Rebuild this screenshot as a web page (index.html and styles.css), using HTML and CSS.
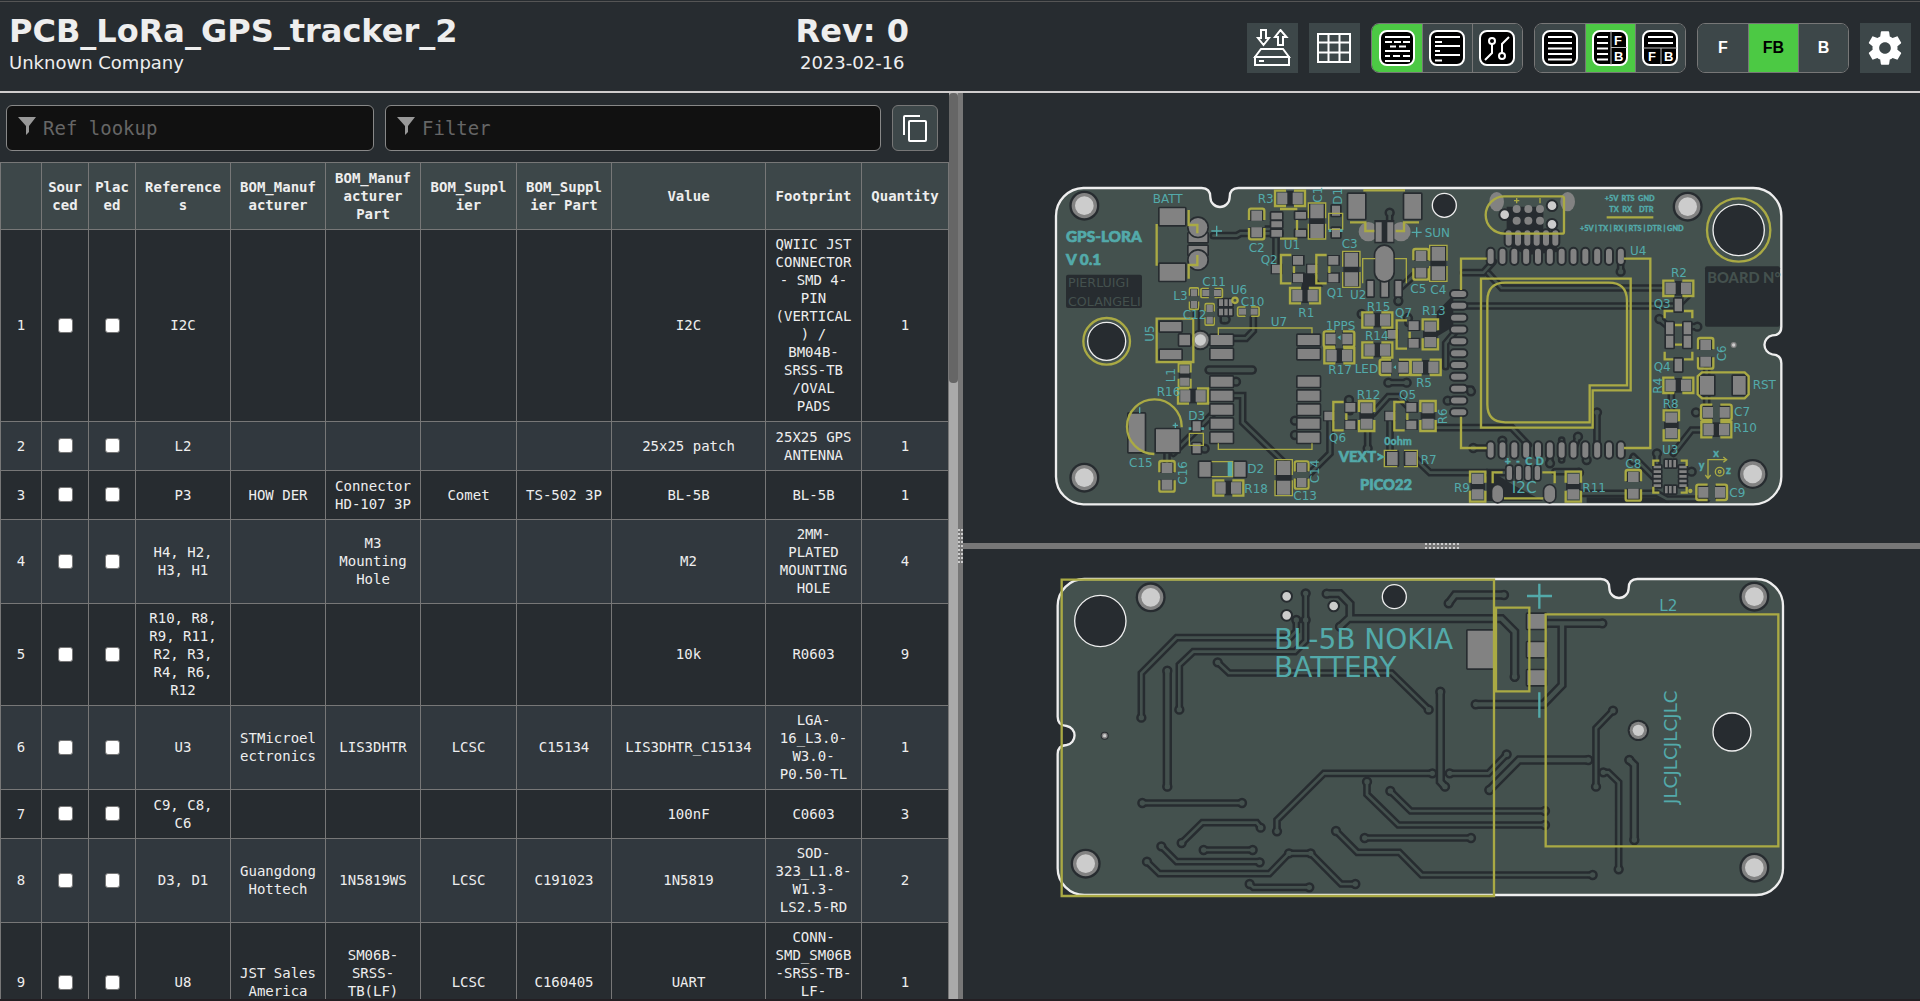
FILE: index.html
```html
<!DOCTYPE html>
<html lang="en">
<head>
<meta charset="utf-8">
<meta name="viewport" content="width=device-width, initial-scale=1">
<title>Interactive BOM - PCB_LoRa_GPS_tracker_2</title>
<link rel="stylesheet" href="styles.css">
</head>
<body>
<header class="topbar">
  <div class="title-block">
    <h1 class="title">PCB_LoRa_GPS_tracker_2</h1>
    <div class="subtitle">Unknown Company</div>
  </div>
  <div class="title-block centered">
    <div class="title">Rev: 0</div>
    <div class="subtitle">2023-02-16</div>
  </div>
  <div class="toolbar">
    <button class="tool" type="button" aria-label="Save and load">
      <svg width="38" height="38" viewBox="0 0 38 38" fill="none" stroke="#fff" stroke-width="2"><path d="M8 1h5v8h3l-5.500 7L5 9h3zM25 16h5V8h3.500L27.500 1 22 8h3zM8 20h22l6 8H2zM2 28h34v8H2zM6 32h5"/></svg>
    </button>
    <button class="tool" type="button" aria-label="Table view">
      <svg width="36" height="32" viewBox="0 0 36 32" fill="none" stroke="#fff" stroke-width="2"><path d="M2 2h32v28H2zM2 10.500h32M2 20.500h32M12.500 2v28M23.500 2v28"/></svg>
    </button>
    <div class="group" role="group" aria-label="BOM mode">
      <button class="seg active" type="button" aria-label="Grouped">
        <svg width="36" height="36" viewBox="0 0 36 36"><rect class="ico-box" x="1" y="1" width="34" height="34" rx="7"/><path class="ico-line" d="M6 7h25M6 12h7m2 0h7m2 0h7M11 16.500h6m3 0h7M6 21h25M6 26h5m3 0h7m3 0h7M6 31h25"/></svg>
      </button>
      <button class="seg" type="button" aria-label="Ungrouped">
        <svg width="36" height="36" viewBox="0 0 36 36"><rect class="ico-box" x="1" y="1" width="34" height="34" rx="7"/><path class="ico-line" d="M6 7h25M6 12h7M6 16h25M6 21h5M6 25h25M6 30.500h7"/></svg>
      </button>
      <button class="seg" type="button" aria-label="Netlist">
        <svg width="36" height="36" viewBox="0 0 36 36"><rect class="ico-box" x="1" y="1" width="34" height="34" rx="7"/><g class="ico-net"><circle cx="13" cy="11" r="3"/><circle cx="23" cy="26" r="3"/><path d="M13 14v9l-7 7M23 23v-9l7-7"/></g></svg>
      </button>
    </div>
    <div class="group" role="group" aria-label="Layout">
      <button class="seg" type="button" aria-label="BOM only">
        <svg width="36" height="36" viewBox="0 0 36 36"><rect class="ico-box" x="1" y="1" width="34" height="34" rx="7"/><path class="ico-line" d="M6 7h24M6 13h24M6 18.500h24M6 24h24M6 29.500h24"/></svg>
      </button>
      <button class="seg active" type="button" aria-label="BOM left, drawings right">
        <svg width="36" height="36" viewBox="0 0 36 36"><rect class="ico-box" x="1" y="1" width="34" height="34" rx="7"/><path class="ico-line" d="M5 7h11M5 13h11M5 18.500h11M5 24h11M5 29.500h11"/><path class="ico-thin" d="M19 1v34M19 17.500h16"/><text class="ico-text" x="22" y="15">F</text><text class="ico-text" x="22" y="31">B</text></svg>
      </button>
      <button class="seg" type="button" aria-label="BOM top, drawings bottom">
        <svg width="36" height="36" viewBox="0 0 36 36"><rect class="ico-box" x="1" y="1" width="34" height="34" rx="7"/><path class="ico-line" d="M6 7h25M6 13h25"/><path class="ico-thin" d="M1 18h34M19 18v17"/><text class="ico-text" x="6" y="31">F</text><text class="ico-text" x="22" y="31">B</text></svg>
      </button>
    </div>
    <div class="group" role="group" aria-label="Board side">
      <button class="seg" type="button">F</button>
      <button class="seg active" type="button">FB</button>
      <button class="seg" type="button">B</button>
    </div>
    <button class="tool" type="button" aria-label="Settings">
      <svg width="40" height="40" viewBox="0 0 24 24" fill="#fff"><path d="M19.430 12.980c.04-.32.07-.64.07-.98s-.03-.66-.07-.98l2.110-1.650c.19-.15.24-.42.12-.64l-2-3.460c-.12-.22-.39-.3-.61-.22l-2.490 1c-.52-.4-1.080-.73-1.690-.98l-.38-2.650C14.460 2.180 14.250 2 14 2h-4c-.25 0-.46.18-.49.42l-.38 2.650c-.61.25-1.170.59-1.690.98l-2.490-1c-.23-.09-.49 0-.61.22l-2 3.460c-.13.22-.07.49.12.64l2.110 1.650c-.04.32-.07.65-.07.98s.03.66.07.98l-2.110 1.650c-.19.15-.24.42-.12.64l2 3.460c.12.22.39.3.61.22l2.490-1c.52.4 1.080.73 1.690.98l.38 2.650c.03.24.24.42.49.42h4c.25 0 .46-.18.49-.42l.38-2.650c.61-.25 1.170-.59 1.690-.98l2.490 1c.23.09.49 0 .61-.22l2-3.460c.12-.22.07-.49-.12-.64l-2.110-1.650zM12 15.500c-1.930 0-3.500-1.570-3.500-3.500s1.570-3.500 3.500-3.500 3.500 1.570 3.500 3.500-1.570 3.500-3.500 3.500z"/></svg>
    </button>
  </div>
</header>

<main class="workspace">
  <section class="bom-pane">
    <div class="bom">
      <div class="filters">
        <label class="field ref-field">
          <svg width="18" height="18" viewBox="0 0 18 18" fill="#999" aria-hidden="true"><path d="M0 0h18l-7 9v6l-3 3V9z"/></svg>
          <input type="text" placeholder="Ref lookup" aria-label="Ref lookup">
        </label>
        <label class="field">
          <svg width="18" height="18" viewBox="0 0 18 18" fill="#999" aria-hidden="true"><path d="M0 0h18l-7 9v6l-3 3V9z"/></svg>
          <input type="text" placeholder="Filter" aria-label="Filter">
        </label>
        <button class="copy" type="button" aria-label="Copy BOM">
          <svg width="26" height="28" viewBox="0 0 26 28" fill="none" stroke="#fff" stroke-width="2"><path d="M2 21V3q0-1 1-1h15"/><rect x="7" y="7" width="17" height="20" rx="1"/></svg>
        </button>
      </div>
      <table class="bom-table">
        <colgroup>
          <col class="c-num"><col class="c-check"><col class="c-check"><col class="c-std"><col class="c-std"><col class="c-std"><col class="c-wide"><col class="c-std"><col><col class="c-wide"><col class="c-qty">
        </colgroup>
        <thead>
          <tr><th></th><th>Sourced</th><th>Placed</th><th>References</th><th>BOM_Manufacturer</th><th>BOM_Manufacturer Part</th><th>BOM_Supplier</th><th>BOM_Supplier Part</th><th>Value</th><th>Footprint</th><th>Quantity</th></tr>
        </thead>
        <tbody>
          <tr><td>1</td><td><input type="checkbox" aria-label="Sourced 1"></td><td><input type="checkbox" aria-label="Placed 1"></td><td>I2C</td><td></td><td></td><td></td><td></td><td>I2C</td><td>QWIIC JST CONNECTOR - SMD 4-PIN (VERTICAL) / BM04B-SRSS-TB /OVAL PADS</td><td>1</td></tr>
          <tr><td>2</td><td><input type="checkbox" aria-label="Sourced 2"></td><td><input type="checkbox" aria-label="Placed 2"></td><td>L2</td><td></td><td></td><td></td><td></td><td>25x25 patch</td><td>25X25 GPS ANTENNA</td><td>1</td></tr>
          <tr><td>3</td><td><input type="checkbox" aria-label="Sourced 3"></td><td><input type="checkbox" aria-label="Placed 3"></td><td>P3</td><td>HOW DER</td><td>Connector HD-107 3P</td><td>Comet</td><td>TS-502 3P</td><td>BL-5B</td><td>BL-5B</td><td>1</td></tr>
          <tr><td>4</td><td><input type="checkbox" aria-label="Sourced 4"></td><td><input type="checkbox" aria-label="Placed 4"></td><td>H4, H2, H3, H1</td><td></td><td>M3 Mounting Hole</td><td></td><td></td><td>M2</td><td>2MM-PLATED MOUNTING HOLE</td><td>4</td></tr>
          <tr><td>5</td><td><input type="checkbox" aria-label="Sourced 5"></td><td><input type="checkbox" aria-label="Placed 5"></td><td>R10, R8, R9, R11, R2, R3, R4, R6, R12</td><td></td><td></td><td></td><td></td><td>10k</td><td>R0603</td><td>9</td></tr>
          <tr><td>6</td><td><input type="checkbox" aria-label="Sourced 6"></td><td><input type="checkbox" aria-label="Placed 6"></td><td>U3</td><td>STMicroelectronics</td><td>LIS3DHTR</td><td>LCSC</td><td>C15134</td><td>LIS3DHTR_C15134</td><td>LGA-16_L3.0-W3.0-P0.50-TL</td><td>1</td></tr>
          <tr><td>7</td><td><input type="checkbox" aria-label="Sourced 7"></td><td><input type="checkbox" aria-label="Placed 7"></td><td>C9, C8, C6</td><td></td><td></td><td></td><td></td><td>100nF</td><td>C0603</td><td>3</td></tr>
          <tr><td>8</td><td><input type="checkbox" aria-label="Sourced 8"></td><td><input type="checkbox" aria-label="Placed 8"></td><td>D3, D1</td><td>Guangdong Hottech</td><td>1N5819WS</td><td>LCSC</td><td>C191023</td><td>1N5819</td><td>SOD-323_L1.8-W1.3-LS2.5-RD</td><td>2</td></tr>
          <tr><td>9</td><td><input type="checkbox" aria-label="Sourced 9"></td><td><input type="checkbox" aria-label="Placed 9"></td><td>U8</td><td>JST Sales America</td><td>SM06B-SRSS-TB(LF) (SN)</td><td>LCSC</td><td>C160405</td><td>UART</td><td>CONN-SMD_SM06B-SRSS-TB-LF-SN_JST_6P- P1.00</td><td>1</td></tr>
        </tbody>
      </table>
    </div>
    <div class="rail"><div class="thumb"></div></div>
    <div class="gutter-v"><div class="grip-v"></div></div>
  </section>

  <section class="boards">
    <svg class="board" viewBox="-231 -231 2871 1350" role="img" aria-label="Front side">
      <defs>
        <g id="res"><rect class="gap" x="-44" y="-22" width="88" height="44"/><path class="fillc" d="M-44-22h34v44h-34zM10-22h34v44h-34z"/><path class="pad" d="M-38-17h30v34h-30zM8-17h30v34h-30z"/><path class="silk" d="M-12-23H-45V23H-12M12-23H45V23H12"/></g>
        <g id="cap"><rect class="gap" x="-40" y="-21" width="80" height="42"/><path class="fillc" d="M-10-24h20v48h-20z"/><path class="pad" d="M-40-16h30v32h-30zM10-16h30v32h-30z"/><path class="silk" d="M-12-23H-40q-6 0-6 6V17q0 6 6 6H-12M12-23H40q6 0 6 6V17q0 6-6 6H12"/></g>
        <g id="capb"><rect class="gap" x="-24" y="-52" width="48" height="104"/><path class="pad" d="M-20-50h40v42h-40zM-20 9h40v42h-40z"/><path class="silk thin" d="M-26-8V-54H26V-8M-26 8V54H26V8"/></g>
        <g id="sot"><path class="gap" d="M-50-16h36v32h-36zM14-42h38v32h-38zM14 10h38v32h-38z"/><path class="pad" d="M-46-13h30v26h-30zM17-39h30v26h-30zM17 14h30v26h-30z"/><path class="silk" d="M12-42H-19V43H12M20-8V12"/></g>
        <g id="mount"><circle class="gap" r="45"/><circle class="pad" r="38"/><circle class="hole" r="28"/></g>
        <path id="ft" d="M520 197H590L602 190H720M640 425V482L618 505H575M580 677H608V757L745 890M400 850L520 730M870 750V850L800 920M708 190V290M469 415V490M381 840V880M983 740V835M1050 740V850M1000 730L1045 680H1075L1110 715M1190 773H1415L1465 825M1120 860L1170 908H1410M1256 408H1915M1270 308H1330L1360 275M1345 310L1385 354H1900M1256 657H1293M1256 692H1223M1352 834H1300M1742 259V305M1671 727V840M1858 447L1885 470M1972 470H1945M1600 970H1850L1880 987H2000M1900 850L1955 780H2010M1894 670V740M2000 600V700M1780 860L1840 920M1614 800L1600 840M1049 128V200M1075 395V350M1085 350L1150 290M1387 820V810M1565 810V870M1530 840V880M1217 590V520L1250 480M700 177H650M1920 355L1945 375L1915 405M550 440V452M575 635H590M1945 905H1955M1851 850V880M1545 905H1617M930 725V690M1104 460V440"/>
        <path id="fv" d="M983 835h0M1293 664h0M1223 692h0M1300 834h0M1742 305h0M1671 727h0M1858 447h0M1972 470h0M1780 870h0M1614 800h0M1049 128h0M1075 393h0M1387 812h0M1530 880h0M557 448h0M588 635h0M1955 905h0M1851 850h0M1617 908h0M927 690h0M965 432h0M1104 445h0M1968 727h0M765 752h0M765 795h0M494 836h0M1640 870h0"/>
        <path id="u4pads" d="M1352 245v28m35.500-28v28m35.500-28v28m35.500-28v28m35.500-28v28m35.500-28v28m35.500-28v28m35.500-28v28m35.500-28v28m35.500-28v28m35.500-28v28m35.500-28v28M1352 826v28m35.500-28v28m35.500-28v28m35.500-28v28m35.500-28v28m35.500-28v28m35.500-28v28m35.500-28v28m35.500-28v28m35.500-28v28m35.500-28v28m35.500-28v28M1242 372h28m-28 35.500h28m-28 35.500h28m-28 35.500h28m-28 35.500h28m-28 35.500h28m-28 35.500h28m-28 35.500h28m-28 35.500h28m-28 35.500h28m-28 35.500h28M1406 190v28m28-28v28m28-28v28m28-28v28m28-28v28m28-28v28"/>
      </defs>
      <path class="copper" d="M130 54H485C503 54 511 64 511 82A29 29 0 0 0 569 82C569 64 577 54 595 54H2140A84 84 0 0 1 2224 138V470C2224 488 2214 496 2197 496A29 29 0 0 0 2197 553C2214 554 2224 562 2224 580V920A84 84 0 0 1 2140 1003H130A84 84 0 0 1 48 920V138A84 84 0 0 1 130 54Z"/>
      <use href="#ft" class="t-gap"/><use href="#fv" class="v-gap"/><use href="#ft" class="t-in"/><use href="#fv" class="v-in"/>
      <path class="gap" d="M1240 375L1190 425V500L1240 470ZM790 310h30l30 40h-45v35h-25zM1340 895l80 50 90 48H1340zM1640 982h220l30 16H1640zM1400 110h110v110h-110zM1400 225l60 30 100-10-20-30z"/>
      <path class="w-gap" d="M507 600H637"/><path class="w-in" d="M507 600H637"/>
      <path class="t-gap" d="M1045 638H1100"/><path class="v-gap" d="M1045 638h0M1100 638h0"/><path class="v-in" d="M1045 638h0M1100 638h0"/><path class="t-in" d="M1045 638H1100"/>
      <path class="outline" d="M130 54H485C503 54 511 64 511 82A29 29 0 0 0 569 82C569 64 577 54 595 54H2140A84 84 0 0 1 2224 138V470C2224 488 2214 496 2197 496A29 29 0 0 0 2197 553C2214 554 2224 562 2224 580V920A84 84 0 0 1 2140 1003H130A84 84 0 0 1 48 920V138A84 84 0 0 1 130 54Z"/>
      <use href="#mount" x="133" y="107"/><use href="#mount" x="133" y="923"/><use href="#mount" x="1943" y="110"/><use href="#mount" x="2138" y="912"/>
      <g class="cutout"><circle cx="200" cy="514" r="57"/><circle cx="2096" cy="180" r="77"/><circle cx="1213" cy="106" r="36"/></g>
      <circle class="gap" cx="481" cy="510" r="31"/><circle class="pad" cx="481" cy="510" r="25"/><circle class="hole" cx="481" cy="510" r="17"/>
      <circle class="pad" cx="2081" cy="525" r="9"/><circle class="hole" cx="2081" cy="525" r="5"/>
      <rect class="gap" x="78" y="314" width="228" height="100" rx="6"/><rect class="gap" x="1995" y="289" width="225" height="181" rx="6"/>

      <g class="pad haloed">
        <path d="M359 115h76v50h-76zM359 282h76v50h-76zM446 190h56v26h-56zM446 228h56v26h-56z"/><circle cx="474" cy="172" r="28"/><circle cx="474" cy="270" r="28"/>
        <path d="M694 128h32v20h-32zM694 154h32v18h-32zM694 180h32v20h-32zM766 126h32v20h-32zM766 180h32v20h-32z"/>
        <path d="M876 107h24v30h-24zM876 174h24v28h-24zM458 754h24v30h-24zM458 820h24v30h-24zM478 876h34v44h-34zM583 876h34v44h-34z"/>
        <path d="M266 731h48v115h-48zM348 778h70v68h-70zM360 456h64v28h-64zM360 540h64v28h-64zM418 494h32v32h-32z"/>
        <path d="M512 495h66v30h-66zM512 537h66v30h-66zM512 620h66v30h-66zM512 662h66v30h-66zM512 704h66v30h-66zM512 746h66v30h-66zM512 788h66v30h-66zM773 495h66v30h-66zM773 537h66v30h-66zM773 620h66v30h-66zM773 662h66v30h-66zM773 704h66v30h-66zM773 746h66v30h-66zM773 788h66v30h-66z"/>
        <path d="M925 72h50v74h-50zM1093 72h50v74h-50zM982 333h18v46h-18zM1066 333h18v46h-18zM1024 300h20v80h-20zM1041 846h32v40h-32zM1096 846h34v40h-34z"/>
        <rect x="1006" y="228" width="54" height="105" rx="27"/>
        <path d="M1904 386h22v38h-22zM1904 566h22v38h-22zM1878 457h22v36h-22zM1878 497h22v36h-22zM1931 457h22v36h-22zM1931 497h22v36h-22zM1980 618h42v56h-42zM2079 618h38v56h-38z"/>
        <path d="M537 388h12v20h-12zM553 388h10v20h-10zM567 388h10v20h-10zM537 416h12v20h-12zM553 416h10v20h-10zM567 416h10v20h-10z"/>
        <path d="M1875 870h8v22h-8zM1887 870h8v22h-8zM1900 870h8v22h-8zM1875 948h8v22h-8zM1887 948h8v22h-8zM1900 948h8v22h-8zM1841 887h22v8h-22zM1841 901h22v8h-22zM1841 915h22v8h-22zM1841 929h22v8h-22zM1841 943h22v8h-22zM1918 887h22v8h-22zM1918 901h22v8h-22zM1918 915h22v8h-22zM1918 929h22v8h-22zM1918 943h22v8h-22z"/>
        <rect x="1400" y="888" width="16" height="42" rx="6"/><rect x="1428" y="888" width="16" height="42" rx="6"/><rect x="1456" y="888" width="16" height="42" rx="6"/><rect x="1484" y="888" width="16" height="42" rx="6"/>
        <rect x="1357" y="946" width="32" height="50" rx="16"/><rect x="1513" y="946" width="32" height="50" rx="16"/>
      </g>
      <g class="pad"><circle cx="985" cy="185" r="29"/><circle cx="1083" cy="185" r="29"/><ellipse cx="1370" cy="95" rx="22" ry="29"/><ellipse cx="1583" cy="95" rx="22" ry="29"/></g>
      <path class="gap" d="M1003 150h60v70h-60z"/><path class="pad" d="M1007 157h18v58h-18zM1042 157h18v58h-18z"/>
      <use href="#u4pads" class="u4-gap"/><use href="#u4pads" class="u4-pad"/>
      <g class="pad"><circle cx="1430" cy="117" r="12"/><circle cx="1465" cy="117" r="12"/><circle cx="1500" cy="117" r="12"/><circle cx="1430" cy="152" r="12"/><circle cx="1465" cy="152" r="12"/><circle cx="1500" cy="152" r="12"/></g>
      <g class="pin"><circle cx="1394" cy="134" r="16"/><circle cx="1536" cy="107" r="16"/><circle cx="1536" cy="163" r="16"/></g>

      <use href="#res" x="750" y="85"/><use href="#res" x="795" y="377"/><use href="#res" x="459" y="678"/><use href="#res" x="565" y="954"/><use href="#res" x="1012" y="450"/><use href="#res" x="1012" y="540"/><use href="#res" x="898" y="557"/><use href="#res" x="1157" y="592"/><use href="#res" x="1915" y="355"/><use href="#res" x="1915" y="646"/><use href="#res" x="2029" y="779"/>
      <use href="#res" transform="translate(1171 493) rotate(90)"/><use href="#res" transform="translate(980 738) rotate(90)"/><use href="#res" transform="translate(1164 738) rotate(90)"/><use href="#res" transform="translate(1313 950) rotate(90)"/><use href="#res" transform="translate(1894 766) rotate(90)"/><use href="#res" transform="translate(1600 950) rotate(90)"/>
      <use href="#cap" x="2029" y="727"/><use href="#cap" x="2015" y="967"/><use href="#cap" x="897" y="507"/><use href="#cap" x="1065" y="592"/>
      <use href="#cap" transform="translate(650 162) rotate(90)"/><use href="#cap" transform="translate(381 919) rotate(90)"/><use href="#cap" transform="translate(785 915) rotate(90) scale(.9)"/><use href="#cap" transform="translate(1143 283) rotate(90)"/><use href="#cap" transform="translate(1997 550) rotate(90)"/><use href="#cap" transform="translate(1780 946) rotate(90)"/>
      <use href="#capb" x="831" y="153"/><use href="#capb" x="934" y="298"/><use href="#capb" x="1195" y="280"/><use href="#capb" x="731" y="923"/>
      <use href="#cap" transform="translate(462 386) rotate(90) scale(.7 .6)"/><use href="#cap" transform="translate(515 369) scale(.7 .6)"/><use href="#cap" transform="translate(509 433) rotate(90) scale(.7 .6)"/><use href="#cap" transform="translate(625 425) scale(.7 .6)"/><use href="#res" transform="translate(434 617) rotate(90) scale(.8)"/>
      <use href="#sot" x="742" y="297"/><use href="#sot" x="848" y="297"/><use href="#sot" x="1089" y="493"/><use href="#sot" x="899" y="738"/><use href="#sot" x="1082" y="738"/>

      <g class="silk">
        <path d="M350 162V287M446 120V165H472V190M446 326V285H472V255M720 117H772M720 206H772M771 150V180M350 446H460V576H350ZM343 852A82 82 0 1 1 425 772"/>
        <path d="M970 61H1095M930 157H976V183H1003M1137 157H1092V183H1067M1263 360V266H1340M1263 740V834H1340M1752 266H1831V834H1752"/>
        <path d="M1323 326H1772V661H1658V773H1323ZM1396 338H1706Q1761 338 1761 393V646H1649V757H1396Q1342 757 1342 703V393Q1342 338 1396 338Z"/>
        <path d="M1566 79H1393A56 56 0 0 0 1393 191H1566Q1572 191 1572 185V85Q1572 79 1566 79ZM1358 940V907H1388M1507 907H1544V940M1392 985H1510M1700 142H1840"/>
        <path d="M1874 445V423H1900M1932 423H1957V445M1874 545V568H1900M1932 568H1957V545M1905 465H1926M1905 524H1926M1986 607H2114L2126 619V673L2114 685H1986L1973 673V619Z"/>
        <path d="M1840 888V872H1858M1922 872H1940V888M1840 950V968H1858M1922 968H1940V950"/>
        <circle cx="200" cy="514" r="70"/><circle cx="2096" cy="180" r="95"/><circle cx="585" cy="391" r="8"/><circle cx="1951" cy="963" r="3"/>
      </g>
      <path class="silk thin" d="M535 495V474H816V490M535 820V838H816V820M866 130H908V178H866ZM448 790H490V826H448ZM515 875H578V920H515M968 340V266H1006M1064 266H1099V340M1072 841H1033V890H1072M1092 841H1132V890H1092M1422 92h16m-8-8v16M1500 84v16M2004 925V869H2060M1996 915l8 10 8-10M2050 861l10 8-10 8"/>
      <g class="silk thin"><circle cx="2039" cy="905" r="13"/><circle cx="2039" cy="905" r="4"/></g>
      <path class="mark" d="M514 183h32m-16-16v32M1115 187h30m-15-15v30M398 766h16m-8-8v16M299 712v18"/>
      <path fill="#53aaaa" d="M563 875h14v44h-14zM446 772h8v8h-8zM484 772h8v8h-8zM866 178h8v8h-8zM900 178h8v8h-8zM892 502l10 8v-14zM1060 592l8 6v-12z"/>

      <g class="label">
        <text x="338" y="100">BATT</text><text x="653" y="98">R3</text><text x="626" y="245">C2</text><text x="731" y="236">U1</text><text x="662" y="283">Q2</text><text x="860" y="380">Q1</text><text x="775" y="440">R1</text><text x="487" y="347">C11</text><text x="400" y="390">L3</text><text x="572" y="371">U6</text><text x="602" y="407">C10</text><text x="428" y="446">C12</text><text x="692" y="468">U7</text><text x="350" y="678">R16</text><text x="445" y="750">D3</text><text x="267" y="891">C15</text><text x="622" y="908">D2</text><text x="613" y="968">R18</text><text x="760" y="989">C13</text>
        <text x="905" y="234">C3</text><text x="930" y="386">U2</text><text x="1154" y="200">SUN</text><text x="1111" y="369">C5</text><text x="1171" y="371">C4</text><text x="980" y="422">R15</text><text x="1065" y="440">Q7</text><text x="1146" y="436">R13</text><text x="857" y="480">1PPS</text><text x="975" y="510">R14</text><text x="865" y="613">R17</text><text x="944" y="608">LED</text><text x="1128" y="650">R5</text><text x="950" y="688">R12</text><text x="1077" y="686">Q5</text><text x="867" y="815">Q6</text><text x="1142" y="881">R7</text><text x="1242" y="965">R9</text>
        <text x="1770" y="254">U4</text><text x="1893" y="322">R2</text><text x="1841" y="415">Q3</text><text x="1841" y="603">Q4</text><text x="2138" y="656">RST</text><text x="1868" y="715">R8</text><text x="2082" y="738">C7</text><text x="2080" y="787">R10</text><text x="1866" y="851">U3</text><text x="1756" y="893">C8</text><text x="1627" y="965">R11</text><text x="2068" y="982">C9</text>
        <text transform="translate(845 98) rotate(-90)">C1</text><text transform="translate(905 104) rotate(-90)">D1</text><text transform="translate(341 515) rotate(-90)">U5</text><text transform="translate(406 637) rotate(-90)">L1</text><text transform="translate(440 944) rotate(-90)">C16</text><text transform="translate(837 940) rotate(-90)">C14</text><text transform="translate(1220 763) rotate(-90)">R6</text><text transform="translate(1865 671) rotate(-90)">R4</text><text transform="translate(2058 574) rotate(-90)">C6</text>
        <text class="mid" x="1415" y="968">I2C</text>
      </g>
      <g class="heavy">
        <text class="big" x="78" y="217">GPS-LORA</text><text class="big" x="78" y="285">V 0.1</text><text class="vext" x="896" y="876">VEXT&gt;</text><text class="vext" x="960" y="961">PICO22</text>
        <text class="small" x="1033" y="825">0ohm</text><text class="small" x="1394" y="886">+</text><text class="small" x="1428" y="886">-</text><text class="small" x="1456" y="886">C</text><text class="small" x="1487" y="886">D</text><text class="small" x="2020" y="862">x</text><text class="small" x="1976" y="897">y</text><text class="small" x="2058" y="912">z</text>
        <text class="tiny" x="1694" y="92">+5V&#160; RTS&#160; GND</text><text class="tiny" x="1708" y="127">TX&#160; RX&#160;&#160;&#160; DTR</text><text class="tiny" x="1620" y="184">+5V | TX | RX | RTS | DTR | GND</text>
      </g>
      <text class="knock" x="84" y="352">PIERLUIGI</text><text class="knock" x="84" y="408">COLANGELI</text><text class="knock bold" x="2002" y="340">BOARD N°</text>
    </svg>
    <div class="gutter-h"><div class="grip-h"></div></div>
    <svg class="board" viewBox="-231 57 2871 1350" role="img" aria-label="Back side">
      <defs>
        <path id="bt" d="M304 563V430L410 323H750L769 303V270M418 539V405L460 365H765L797 333V190M533 397L567 429H1055L1166 538M711 904V870L852 730H1177M981 755V793L1075 885H1515M1051 783L1112 843H1515M974 924H1293M888 903L952 967H1078L1145 1035H1658M425 939L487 878H650L662 893M364 949L410 995H659M491 960H638M321 995L358 1031H688L747 970H812L903 1062H946M629 1062L640 1072H808M1719 542L1668 595V770M1690 727H1705L1736 757V1018M307 819H606M1229 730H1345L1400 673"/>
        <path id="bw" d="M382 422V770M860 191H900L930 222V262L900 290M930 266H1385L1424 305V442M1201 485V755L1215 770M1348 780L1437 690H1645M1768 690L1783 705V930M1226 220L1245 195H1392M1500 280H1687M1566 285V465L1510 523H1307"/>
        <path id="bv" d="M304 563h0M769 270h0M418 539h0M797 190h0M797 270h0M533 397h0M1166 539h0M711 904h0M1177 730h0M981 755h0M1515 885h0M1051 783h0M1515 843h0M974 924h0M1293 924h0M888 903h0M1658 1035h0M425 939h0M662 893h0M364 949h0M659 997h0M491 960h0M638 960h0M321 995h0M747 970h0M812 970h0M946 1062h0M629 1062h0M808 1072h0M1719 542h0M1668 770h0M1690 727h0M1736 1018h0M307 819h0M606 819h0M1229 730h0M1400 673h0M382 422h0M382 770h0M860 191h0M900 290h0M1424 440h0M1201 485h0M1215 770h0M1348 780h0M1645 690h0M1768 690h0M1783 930h0M1226 220h0M1392 195h0M1687 280h0M1307 523h0"/>
      </defs>
      <path class="copper" d="M133 147H1682C1700 147 1708 158 1708 175A29 29 0 0 0 1766 175C1766 158 1774 147 1792 147H2149A80 80 0 0 1 2229 227V1015A80 80 0 0 1 2149 1095H133A80 80 0 0 1 53 1015V672C53 655 62 646 80 645A29 29 0 0 0 80 588C62 587 53 578 53 560V227A80 80 0 0 1 133 147Z"/>
      <use href="#bt" class="t-gap"/><use href="#bw" class="w-gap"/><use href="#bv" class="v-gap"/><use href="#bt" class="t-in"/><use href="#bw" class="w-in"/><use href="#bv" class="v-in"/>
      <path class="outline" d="M133 147H1682C1700 147 1708 158 1708 175A29 29 0 0 0 1766 175C1766 158 1774 147 1792 147H2149A80 80 0 0 1 2229 227V1015A80 80 0 0 1 2149 1095H133A80 80 0 0 1 53 1015V672C53 655 62 646 80 645A29 29 0 0 0 80 588C62 587 53 578 53 560V227A80 80 0 0 1 133 147Z"/>
      <use href="#mount" x="332" y="202"/><use href="#mount" x="137" y="1001"/><use href="#mount" x="2143" y="200"/><use href="#mount" x="2143" y="1013"/>
      <g class="cutout"><circle cx="181" cy="273" r="77"/><circle cx="1063" cy="200" r="36"/><circle cx="2076" cy="606" r="57"/></g>
      <circle class="gap" cx="1795" cy="601" r="32"/><circle class="pad" cx="1795" cy="601" r="26"/><circle class="hole" cx="1795" cy="601" r="17"/>
      <circle class="gap" cx="194" cy="617" r="12"/><circle class="pad" cx="194" cy="617" r="9"/><circle class="hole" cx="194" cy="617" r="5"/>
      <g class="pin"><circle cx="740" cy="199" r="16"/><circle cx="740" cy="256" r="16"/><circle cx="881" cy="228" r="16"/></g>
      <path class="pad haloed" d="M1283 302h76v113h-76zM1462 252h55v44h-55zM1462 337h55v44h-55zM1462 421h55v44h-55z"/>
      <path class="silk" d="M65 149H1362V1098H65ZM1368 233H1468V484H1368ZM1517 253H2215V949H1517Z"/>
      <path class="mark bold" d="M1461 198h75m-38-37v75M1498 487v76"/>
      <g class="label"><text class="huge" x="702" y="357">BL-5B NOKIA</text><text class="huge" x="702" y="441">BATTERY</text><text class="mid" x="1858" y="242">L2</text><text class="jlc" transform="translate(1911 822) rotate(-90)">JLCJLCJLCJLC</text></g>
    </svg>
  </section>
</main>
</body>
</html>
```
FILE: styles.css
```css
* { box-sizing: border-box; }

body {
  margin: 0;
  height: 100vh;
  display: flex;
  flex-direction: column;
  overflow: hidden;
  padding-top: 1px;
  background: #272c30;
  color: #eee;
  font-family: "DejaVu Sans", Verdana, sans-serif;
  border-bottom: 2px solid #231f23;
}

/* Header */
.topbar {
  flex: none;
  display: flex;
  justify-content: space-between;
  align-items: flex-start;
  height: 92px;
  padding: 0 9px;
  border-top: 1px solid #555;
  border-bottom: 2px solid #d0cdcd;
}
.title-block { padding-top: 9px; }
.centered { text-align: center; }
.title {
  margin: 0;
  font-size: 32px;
  line-height: 40px;
  font-weight: 700;
}
.subtitle { font-size: 18px; line-height: 24px; }

.toolbar { display: flex; gap: 11px; padding-top: 21px; }
button {
  margin: 0;
  padding: 0;
  border: 0;
  display: flex;
  align-items: center;
  justify-content: center;
  background: #3d4749;
  color: #fff;
  font: 700 16px/20px "Liberation Sans", Arial, sans-serif;
}
.tool { width: 51px; height: 50px; }
.group {
  display: flex;
  height: 50px;
  border: 1px solid #777;
  border-radius: 8px;
  overflow: hidden;
}
.seg { width: 50px; }
.seg + .seg { border-left: 1px solid #777; }
.seg.active { background: #4cc944; color: #000; }

.ico-box { fill: #000; stroke: #fff; stroke-width: 2; }
.ico-line { stroke: #fff; stroke-width: 2; fill: none; }
.ico-thin { stroke: #bbb; stroke-width: 1; fill: none; }
.ico-net { stroke: #fff; stroke-width: 2; fill: none; }
.ico-text { fill: #fff; font: 700 13px "Liberation Sans", Arial, sans-serif; }

/* Panes */
.workspace { flex: 1; min-height: 0; display: flex; }
.bom-pane { flex: none; width: calc(50% + 3px); display: flex; }
.bom { flex: 1; min-width: 0; overflow: hidden; }
.rail { width: 9px; background: #aaa; }
.thumb { height: 32%; background: #666; border-radius: 4px; }
.gutter-v, .gutter-h { display: flex; align-items: center; justify-content: center; background: #777; }
.gutter-v { width: 5px; }
.gutter-h { flex: none; height: 6px; }
.grip-v {
  width: 5px;
  height: 34px;
  background:
    linear-gradient(90deg, transparent 2px, #777 2px 3px, transparent 3px),
    repeating-linear-gradient(#ccc 0 2px, #777 2px 4px);
}
.grip-h {
  width: 34px;
  height: 6px;
  background:
    linear-gradient(transparent 2px, #777 2px 4px, transparent 4px),
    repeating-linear-gradient(90deg, #ccc 0 2px, #777 2px 4px);
}

/* Filters */
.filters { display: flex; gap: 11px; padding: 12px 11px 11px 6px; }
.field {
  flex: 1;
  display: flex;
  align-items: flex-start;
  gap: 7px;
  height: 46px;
  padding: 11px;
  background: #111;
  border: 1px solid #888;
  border-radius: 6px;
}
.field svg { flex: none; }
.ref-field { flex: 0 0 368px; }
.field input {
  flex: 1;
  min-width: 0;
  height: 22px;
  margin: 0;
  padding: 0;
  border: 0;
  outline: 0;
  background: none;
  color: #eee;
  font: 19px/22px "DejaVu Sans Mono", Consolas, monospace;
}
.field input::placeholder { color: #666; opacity: 1; }
.copy { width: 46px; height: 46px; border: 1px solid #777; border-radius: 6px; }

/* BOM table */
.bom-table {
  width: 100%;
  table-layout: fixed;
  border-collapse: collapse;
  font: 14px/18px "DejaVu Sans Mono", Consolas, monospace;
  text-align: center;
}
.c-num { width: 41px; }
.c-check { width: 47px; }
.c-std { width: 95px; }
.c-wide { width: 96px; }
.c-qty { width: 87px; }
.bom-table th, .bom-table td {
  height: 49px;
  padding: 5px 6px 6px;
  border: 1px solid #777;
  overflow-wrap: anywhere;
}
.bom-table th { height: 67px; background: #3d4749; }
.bom-table tbody tr:nth-child(even) { background: #31383e; }
.bom-table input {
  appearance: none;
  display: block;
  width: 15px;
  height: 15px;
  margin: 0 auto;
  background: #fff;
  border: 1px solid #767676;
  border-radius: 3px;
}

/* Board drawings */
.boards { flex: 1; min-width: 0; display: flex; flex-direction: column; }
.board { flex: 1; min-height: 0; width: 100%; display: block; }
.copper { fill: #44514e; }
.outline { fill: none; stroke: #eee; stroke-width: 7; }
.gap { fill: #272c30; }
.fillc { fill: #44514e; }
.pad { fill: #828282; }
.haloed { stroke: #272c30; stroke-width: 10; paint-order: stroke; stroke-linejoin: round; }
.hole { fill: #ccc; }
.pin { fill: #ccc; stroke: #272c30; stroke-width: 6; }
.cutout { fill: #272c30; stroke: #eee; stroke-width: 4; }
.silk { fill: none; stroke: #aaaa44; stroke-width: 7; }
.silk.thin { stroke-width: 4; }
.mark { fill: none; stroke: #53aaaa; stroke-width: 4; }
.mark.bold { stroke-width: 7; }
.t-gap, .w-gap, .v-gap, .u4-gap { fill: none; stroke: #272c30; stroke-linecap: round; }
.t-in, .w-in, .v-in { fill: none; stroke: #44514e; stroke-linecap: round; }
.t-gap { stroke-width: 23; }
.w-gap { stroke-width: 28; }
.v-gap { stroke-width: 31; }
.t-in { stroke-width: 8; }
.w-in { stroke-width: 13; }
.v-in { stroke-width: 16; }
.u4-gap { stroke-width: 30; }
.u4-pad { fill: none; stroke: #828282; stroke-width: 18; stroke-linecap: round; }

.label { fill: #53aaaa; font: 36px "DejaVu Sans", sans-serif; }
.label .mid { font-size: 46px; }
.label .jlc { font-size: 55px; }
.label .huge { font-size: 84px; }
.heavy { fill: #53aaaa; stroke: #53aaaa; stroke-width: 2; font: 900 46px Lato, sans-serif; }
.heavy .vext { font-size: 44px; }
.heavy .small { font-size: 32px; stroke-width: 1; }
.heavy .tiny { font-size: 22px; stroke-width: 1; }
.knock { fill: #44514e; font: 38px "DejaVu Sans", sans-serif; }
.knock.bold { font: 900 44px Lato, sans-serif; }
```
